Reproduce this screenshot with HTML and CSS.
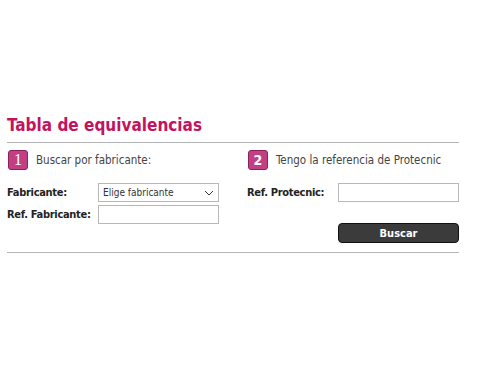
FILE: index.html
```html
<!DOCTYPE html>
<html lang="es">
<head>
  <meta charset="UTF-8">
  <title>Tabla de equivalencias</title>
  <link rel="stylesheet" href="styles.css">
</head>
<body>

  <div class="panel">
    <h1 class="title">Tabla de equivalencias</h1>

    <div class="columns">
      <div class="col">
        <div class="step"><span class="badge badge-serif">1</span> Buscar por fabricante:</div>
        <div class="row">
          <label class="label" for="fabricante">Fabricante:</label>
          <div class="select">
            <span>Elige fabricante</span>
            <svg width="10" height="6" viewBox="0 0 10 6"><path d="M1 1l4 4 4-4" fill="none" stroke="#333" stroke-width="1"/></svg>
          </div>
        </div>
        <div class="row">
          <label class="label" for="refFab">Ref. Fabricante:</label>
          <input class="field" type="text" id="refFab">
        </div>
      </div>

      <div class="col">
        <div class="step"><span class="badge">2</span> Tengo la referencia de Protecnic</div>
        <div class="row">
          <label class="label" for="refPro">Ref. Protecnic:</label>
          <input class="field" type="text" id="refPro">
        </div>
        <div class="actions">
          <button class="btn">Buscar</button>
        </div>
      </div>
    </div>
  </div>

</body>
</html>
```

FILE: styles.css
```css
body {
  margin: 0;
  padding: 0;
  background: #fff;
  font-family: "DejaVu Sans Condensed", "DejaVu Sans", sans-serif;
  color: #333;
}

.panel {
  width: 452px;
  margin: 115px 0 0 7px;
  border-bottom: 1px solid #b5b5b5;
  padding-bottom: 9px;
}

.title {
  margin: 0;
  padding-bottom: 7px;
  font-size: 17px;
  font-weight: bold;
  color: #c4125f;
  border-bottom: 1px solid #b5b5b5;
}

.columns {
  display: grid;
  grid-template-columns: 240px 1fr;
}

.step {
  display: flex;
  align-items: center;
  gap: 8px;
  height: 20px;
  margin: 7px 0 13px 1px;
  font-size: 11.5px;
  color: #444;
}

.badge {
  width: 18px;
  height: 18px;
  border: 1px solid #8e2058;
  border-radius: 3px;
  background: #c23f84;
  color: #fff;
  font-size: 14px;
  font-weight: bold;
  text-align: center;
  line-height: 18px;
}

.badge-serif {
  font-family: "Liberation Serif", serif;
  font-size: 16px;
  font-weight: normal;
}

.row {
  display: flex;
  align-items: center;
  height: 19px;
  margin-bottom: 3px;
}

.label {
  width: 91px;
  font-size: 11px;
  font-weight: bold;
  letter-spacing: -0.3px;
  color: #222;
}

.field, .select {
  box-sizing: border-box;
  width: 121px;
  height: 19px;
  margin: 0;
  border: 1px solid #b8b8b8;
  background: #fff;
}

.select {
  display: flex;
  align-items: center;
  justify-content: space-between;
  padding: 0 4px 0 4px;
  font-size: 10px;
  color: #333;
}

.actions {
  display: flex;
  justify-content: flex-end;
  margin-top: 21px;
}

.btn {
  width: 121px;
  height: 20px;
  padding: 0;
  border: 1px solid #111;
  border-radius: 4px;
  background: #3b3b3b;
  color: #fff;
  font-family: "DejaVu Sans Condensed", "DejaVu Sans", sans-serif;
  font-size: 11px;
  font-weight: bold;
}
```
